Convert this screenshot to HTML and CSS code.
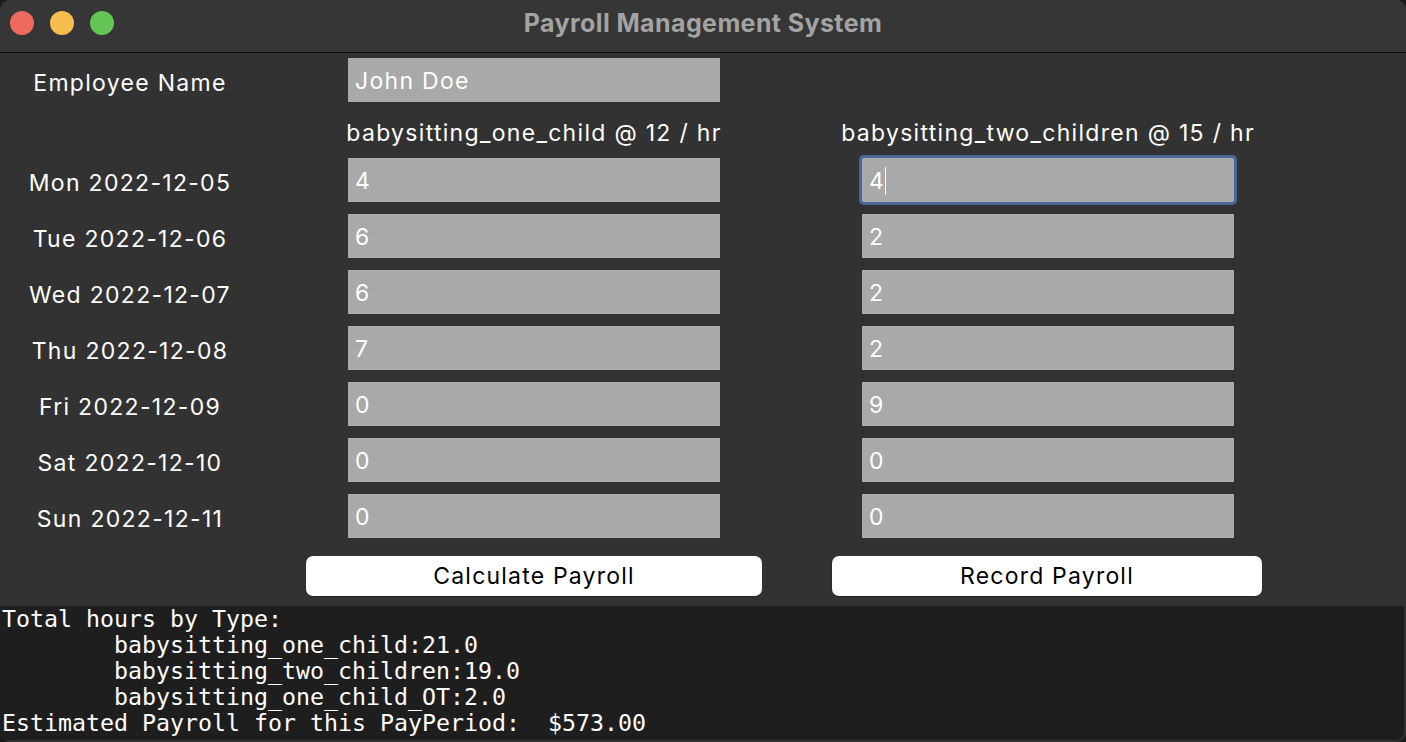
FILE: index.html
```html
<!DOCTYPE html>
<html>
<head>
<meta charset="utf-8">
<link rel="stylesheet" href="styles.css">
</head>
<body>
<div class="window">
  <div class="titlebar">
    <div class="lights">
      <span class="light red"></span>
      <span class="light yellow"></span>
      <span class="light green"></span>
    </div>
    <div class="title">Payroll Management System</div>
  </div>
  <div class="content">
    <div class="form">
      <div class="label">Employee Name</div>
      <div class="field name">John Doe</div>
      <div></div>

      <div></div>
      <div class="head"><span>babysitting_one_child @ 12 / hr</span></div>
      <div class="head"><span>babysitting_two_children @ 15 / hr</span></div>

      <div class="label">Mon 2022-12-05</div>
      <div class="field">4</div>
      <div class="field focus">4<span class="caret"></span></div>

      <div class="label">Tue 2022-12-06</div>
      <div class="field">6</div>
      <div class="field">2</div>

      <div class="label">Wed 2022-12-07</div>
      <div class="field">6</div>
      <div class="field">2</div>

      <div class="label">Thu 2022-12-08</div>
      <div class="field">7</div>
      <div class="field">2</div>

      <div class="label">Fri 2022-12-09</div>
      <div class="field">0</div>
      <div class="field">9</div>

      <div class="label">Sat 2022-12-10</div>
      <div class="field">0</div>
      <div class="field">0</div>

      <div class="label">Sun 2022-12-11</div>
      <div class="field">0</div>
      <div class="field">0</div>
    </div>
    <div class="buttons">
      <button class="btn calc">Calculate Payroll</button>
      <button class="btn record">Record Payroll</button>
    </div>
    <pre class="output">Total hours by Type:
        babysitting_one_child:21.0
        babysitting_two_children:19.0
        babysitting_one_child_OT:2.0
Estimated Payroll for this PayPeriod:  $573.00</pre>
  </div>
</div>
</body>
</html>
```
FILE: styles.css
```css
html, body {
  margin: 0;
  padding: 0;
  background: #1a1a1a;
}
.window {
  width: 1406px;
  height: 742px;
  background: #323232;
  border-radius: 10px;
  overflow: hidden;
  font-family: Inter, "Noto Sans", sans-serif;
  color: #ffffff;
  display: flex;
  flex-direction: column;
  box-sizing: border-box;
}
.titlebar {
  height: 52px;
  flex: 0 0 52px;
  background: #363636;
  border-bottom: 1px solid #0c0c0c;
  display: flex;
  align-items: center;
  justify-content: center;
  position: relative;
}
.lights {
  position: absolute;
  left: 10px;
  top: 11px;
  display: flex;
  gap: 16px;
}
.light {
  width: 24px;
  height: 24px;
  border-radius: 50%;
  display: block;
}
.red { background: #ee6a5f; }
.yellow { background: #f5be4f; }
.green { background: #62c554; }
.title {
  font-size: 25px;
  font-weight: 700;
  color: #a3a3a3;
  margin-top: -7px;
  letter-spacing: 0.4px;
}
.content {
  flex: 1;
  display: flex;
  flex-direction: column;
}
.form {
  display: grid;
  grid-template-columns: 260px 372px 372px;
  grid-template-rows: 44px 32px;
  grid-auto-rows: 44px;
  row-gap: 12px;
  padding-top: 5px;
  font-size: 23px;
  letter-spacing: 1.3px;
}
.form > :nth-child(3n+2) { margin-left: 88px; }
.form > :nth-child(3n) { margin-left: 230px; }
.label {
  text-align: center;
  align-self: center;
  line-height: 26px;
  white-space: nowrap;
  margin-top: 6px;
}
.head {
  line-height: 26px;
  align-self: end;
  display: flex;
  justify-content: center;
  white-space: nowrap;
}
.head span { flex: none; }
.form > .head:nth-child(5) { margin-left: 88px; margin-right: -88px; }
.form > .head:nth-child(6) { margin-left: 230px; margin-right: -230px; }
.field {
  background: #a9a9a9;
  width: 372px;
  height: 44px;
  box-sizing: border-box;
  padding-left: 7px;
  padding-top: 1px;
  line-height: 44px;
  color: #ffffff;
  display: flex;
  align-items: center;
}
.field.focus {
  border-radius: 2px;
  box-shadow: 0 0 0 3px #4a6797;
}
.caret {
  display: inline-block;
  width: 1.5px;
  height: 28px;
  background: #ffffff;
  margin-left: -0.5px;
}
.buttons {
  display: flex;
  padding-left: 306px;
  gap: 70px;
  margin-top: 18px;
}
.btn {
  height: 40px;
  background: #ffffff;
  border: none;
  border-radius: 7px;
  font-family: Inter, "Noto Sans", sans-serif;
  font-size: 23px;
  letter-spacing: 1.2px;
  color: #000000;
  padding: 0;
  box-shadow: 0 1px 1px rgba(0,0,0,0.35);
}
.calc { width: 456px; }
.record { width: 430px; }
.output {
  margin: 10px 2px 2px 0;
  flex: 1;
  background: #1e1e1e;
  font-family: "DejaVu Sans Mono", monospace;
  font-size: 23.25px;
  line-height: 26px;
  color: #ffffff;
  padding: 0 0 0 2px;
  white-space: pre;
  overflow: hidden;
  border-bottom-right-radius: 8px;
}
```
